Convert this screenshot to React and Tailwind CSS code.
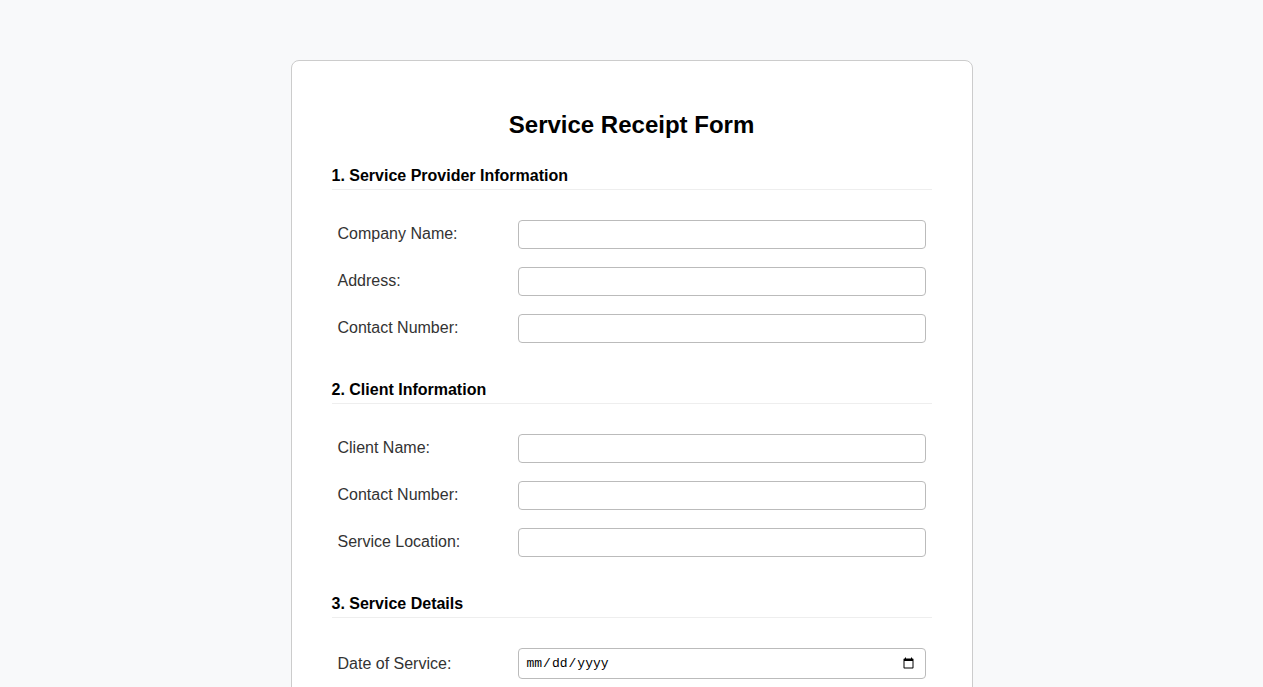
import React from 'react';

const sections = [
  {
    title: '1. Service Provider Information',
    fields: [
      { label: 'Company Name:', type: 'text' },
      { label: 'Address:', type: 'text' },
      { label: 'Contact Number:', type: 'text' },
    ],
  },
  {
    title: '2. Client Information',
    fields: [
      { label: 'Client Name:', type: 'text' },
      { label: 'Contact Number:', type: 'text' },
      { label: 'Service Location:', type: 'text' },
    ],
  },
  {
    title: '3. Service Details',
    fields: [
      { label: 'Date of Service:', type: 'date' },
      { label: 'Service Type:', type: 'text' },
      { label: 'Description:', type: 'text' },
    ],
  },
];

function Field({ label, type }) {
  const isDate = type === 'date';
  return (
    <div className="flex items-center px-[6px]">
      <label
        className={
          isDate
            ? 'w-[180px] shrink-0 pt-[1px] text-[16px] leading-[18px] text-[#333]'
            : 'w-[180px] shrink-0 pb-[2px] text-[16px] leading-[18px] text-[#333]'
        }
      >
        {label}
      </label>
      {isDate ? (
        <input
          type="date"
          className="h-[31px] flex-1 rounded-[4px] border border-[#bbb] bg-white pl-[7px] pr-[8px] font-['Liberation_Mono',monospace] text-[13px] text-black"
        />
      ) : (
        <input
          type="text"
          className="h-[29px] flex-1 rounded-[4px] border border-[#bbb] bg-white px-[7px] text-[13px]"
        />
      )}
    </div>
  );
}

export default function App() {
  return (
    <div className="min-h-screen bg-[#f8f9fa] pt-[60px] pb-[60px] font-['Liberation_Sans',Arial,sans-serif]">
      <div className="mx-auto w-[682px] rounded-[8px] border border-[#ccc] bg-white px-[40px] pt-[50px] pb-[40px]">
        <h1 className="mb-[27px] text-center text-[24px] leading-[28px] font-bold text-black">Service Receipt Form</h1>

        {sections.map((s) => (
          <div key={s.title} className="mb-[37px]">
            <h2 className="mb-[30px] border-b border-[#eee] pt-[1px] pb-[4px] text-[16px] leading-[18px] font-bold text-black">
              {s.title}
            </h2>
            <div className="flex flex-col gap-[18px]">
              {s.fields.map((f) => (
                <Field key={f.label} {...f} />
              ))}
            </div>
          </div>
        ))}
      </div>
    </div>
  );
}
